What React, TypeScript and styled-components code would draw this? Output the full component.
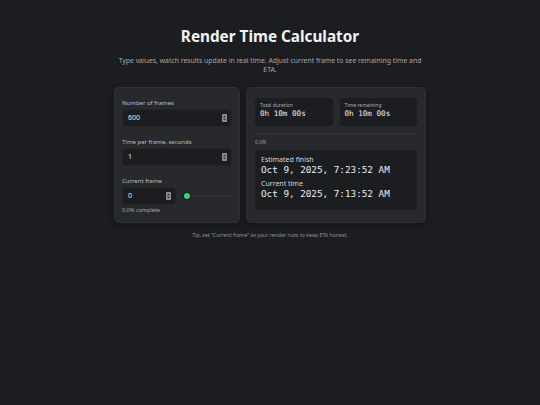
import React from 'react';
import styled, { createGlobalStyle } from 'styled-components';

const GlobalStyle = createGlobalStyle`
  * { box-sizing: border-box; }
  html, body {
    margin: 0;
    padding: 0;
    background: #1c1d20;
    color-scheme: dark;
  }
  body {
    font-family: "Noto Sans", "Open Sans", sans-serif;
    color: #e8e9eb;
  }
`;

const Page = styled.main`
  min-height: 405px;
  padding-top: 26px;
  display: flex;
  flex-direction: column;
  align-items: center;
`;

const Title = styled.h1`
  margin: 0;
  font-size: 15.3px;
  line-height: 20px;
  font-weight: 700;
  color: #f1f2f4;
`;

const Subtitle = styled.p`
  margin: 10px 0 0;
  width: 312px;
  font-size: 6.85px;
  line-height: 9px;
  text-align: center;
  color: #a3a7ae;
`;

const Layout = styled.div`
  margin-top: 13px;
  display: grid;
  grid-template-columns: 126px 180px;
  gap: 6px;
`;

const Card = styled.section`
  background: #27292d;
  border: 1px solid #2e3034;
  border-radius: 5px;
  box-shadow: 0 2px 6px rgba(0, 0, 0, 0.35);
  height: 136px;
`;

const InputCard = styled(Card)`
  padding: 11px 7px 0;
  display: flex;
  flex-direction: column;
`;

const Field = styled.div`
  display: flex;
  flex-direction: column;
  gap: 2px;
  & + & {
    margin-top: 11px;
  }
`;

const Label = styled.div`
  font-size: 6px;
  line-height: 8px;
  color: #b9bdc4;
`;

const InputBox = styled.div<{ $width?: number }>`
  height: 18px;
  width: ${(p) => (p.$width ? `${p.$width}px` : '100%')};
  flex: none;
  display: flex;
  align-items: center;
  gap: 4px;
  padding: 0 4px 0 5px;
  background: #1c1d21;
  border: 1px solid #222428;
  border-radius: 4px;
`;

const NumberInput = styled.input`
  appearance: textfield;
  flex: 1;
  min-width: 0;
  height: 10px;
  padding: 0;
  margin: 0;
  border: 0;
  outline: 0;
  background: transparent;
  color: #e6e7e9;
  font-family: "Noto Sans", sans-serif;
  font-size: 7px;
  line-height: 10px;
  &::-webkit-inner-spin-button,
  &::-webkit-outer-spin-button {
    -webkit-appearance: none;
    margin: 0;
  }
`;

const Spinner = styled.svg`
  flex: none;
  display: block;
`;

const FrameRow = styled.div`
  display: flex;
  align-items: center;
  gap: 8px;
`;

const Range = styled.input`
  appearance: none;
  flex: 1;
  min-width: 0;
  height: 6px;
  margin: 0;
  background: transparent;
  &::-webkit-slider-runnable-track {
    height: 2px;
    background: #2c2e33;
    border-radius: 1px;
  }
  &::-webkit-slider-thumb {
    appearance: none;
    width: 6px;
    height: 6px;
    margin-top: -2px;
    border-radius: 50%;
    background: #3ad07c;
    box-shadow: 0 0 0 1px #1a1b1e;
  }
`;

const Hint = styled.div`
  margin-top: -1px;
  font-size: 5.5px;
  line-height: 8px;
  color: #a3a7ae;
`;

const ResultCard = styled(Card)`
  padding: 10px 8px 0;
  display: flex;
  flex-direction: column;
`;

const Stats = styled.div`
  display: grid;
  grid-template-columns: 1fr 1fr;
  gap: 7px;
`;

const Panel = styled.div`
  background: #1c1d21;
  border-radius: 4px;
`;

const Stat = styled(Panel)`
  height: 28px;
  padding: 4px 5px 0;
`;

const StatLabel = styled.div`
  font-size: 5px;
  line-height: 7px;
  color: #a9adb4;
`;

const Mono = styled.div<{ $size: number }>`
  font-family: "DejaVu Sans Mono", "Liberation Mono", monospace;
  font-size: ${(p) => p.$size}px;
  line-height: ${(p) => p.$size + 3}px;
  color: #eceef0;
  white-space: nowrap;
`;

const Track = styled.div`
  margin-top: 7px;
  height: 2px;
  background: #303237;
  border-radius: 1px;
  overflow: hidden;
`;

const Fill = styled.div`
  height: 100%;
  background: #3ad07c;
`;

const Percent = styled.div`
  margin-top: 4px;
  font-size: 5px;
  line-height: 7px;
  color: #9a9ea5;
`;

const Times = styled(Panel)`
  margin-top: 4px;
  height: 60px;
  padding: 5px 6px 0;
`;

const TimeLabel = styled.div`
  font-size: 7px;
  line-height: 9px;
  color: #d6d8dc;
  & ~ & {
    margin-top: 3px;
  }
`;

const Tip = styled.p`
  margin: 8px 0 0;
  font-size: 5.2px;
  line-height: 8px;
  color: #8e929a;
`;

const SpinIcon = () => (
  <Spinner width="5" height="8" viewBox="0 0 5 8">
    <rect x="0" y="0" width="5" height="8" rx="0.8" fill="#8c8f95" />
    <path d="M1 3.2 L2.5 1.6 L4 3.2 Z" fill="#2a2c30" />
    <path d="M1 4.8 L2.5 6.4 L4 4.8 Z" fill="#2a2c30" />
  </Spinner>
);

interface NumFieldProps {
  value: number;
  width?: number;
}

const NumField = ({ value, width }: NumFieldProps) => (
  <InputBox $width={width}>
    <NumberInput type="number" defaultValue={value} />
    <SpinIcon />
  </InputBox>
);

const frames = 600;
const perFrame = 1;
const current = 0;

const fmt = (secs: number) => {
  const h = Math.floor(secs / 3600);
  const m = Math.floor((secs % 3600) / 60);
  const s = secs % 60;
  return `${h}h ${String(m).padStart(2, '0')}m ${String(s).padStart(2, '0')}s`;
};

const App = () => {
  const total = frames * perFrame;
  const remaining = (frames - current) * perFrame;
  const pct = ((current / frames) * 100).toFixed(1);

  return (
    <>
      <GlobalStyle />
      <Page>
        <Title>Render Time Calculator</Title>
        <Subtitle>
          Type values, watch results update in real time. Adjust current frame to see remaining time and ETA.
        </Subtitle>
        <Layout>
          <InputCard>
            <Field>
              <Label>Number of frames</Label>
              <NumField value={frames} />
            </Field>
            <Field>
              <Label>Time per frame, seconds</Label>
              <NumField value={perFrame} />
            </Field>
            <Field>
              <Label>Current frame</Label>
              <FrameRow>
                <NumField value={current} width={54} />
                <Range type="range" min={0} max={frames} defaultValue={current} />
              </FrameRow>
              <Hint>{pct}% complete</Hint>
            </Field>
          </InputCard>
          <ResultCard>
            <Stats>
              <Stat>
                <StatLabel>Total duration</StatLabel>
                <Mono $size={7.6}>{fmt(total)}</Mono>
              </Stat>
              <Stat>
                <StatLabel>Time remaining</StatLabel>
                <Mono $size={7.6}>{fmt(remaining)}</Mono>
              </Stat>
            </Stats>
            <Track>
              <Fill style={{ width: `${pct}%` }} />
            </Track>
            <Percent>{pct}%</Percent>
            <Times>
              <TimeLabel>Estimated finish</TimeLabel>
              <Mono $size={9.3}>Oct 9, 2025, 7:23:52 AM</Mono>
              <TimeLabel>Current time</TimeLabel>
              <Mono $size={9.3}>Oct 9, 2025, 7:13:52 AM</Mono>
            </Times>
          </ResultCard>
        </Layout>
        <Tip>Tip, set “Current frame” as your render runs to keep ETA honest.</Tip>
      </Page>
    </>
  );
};

export default App;
